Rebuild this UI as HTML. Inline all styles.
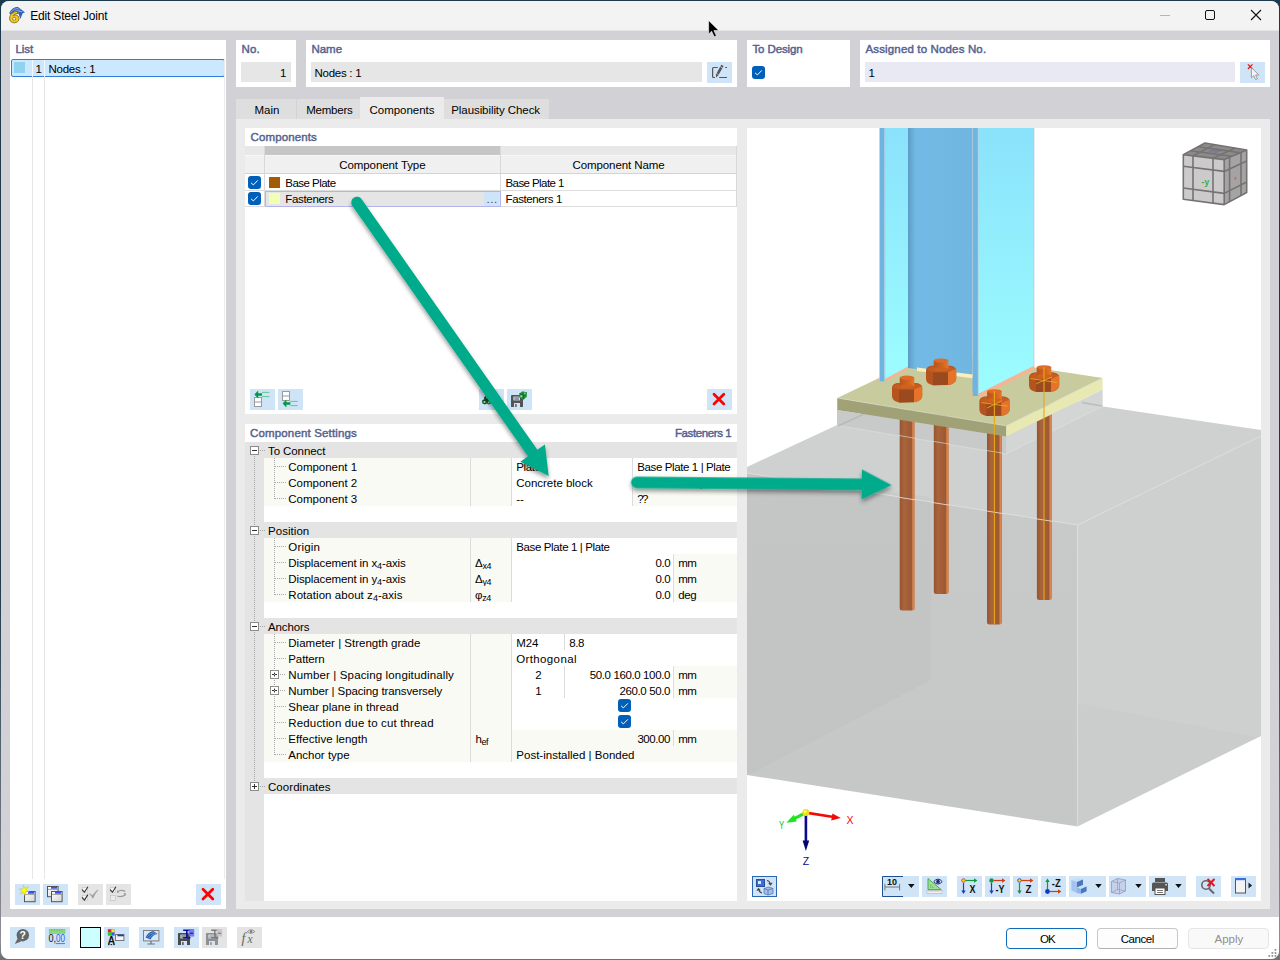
<!DOCTYPE html>
<html><head><meta charset="utf-8"><title>Edit Steel Joint</title>
<style>
html,body{margin:0;padding:0;}
body{width:1280px;height:960px;overflow:hidden;background:linear-gradient(180deg,#1b3b4c 0,#1b3b4c 60%,#8e8e96 98%,#6e6e74 100%);position:relative;font-family:"Liberation Sans",sans-serif;font-size:12px;color:#000;}
.a{position:absolute;box-sizing:border-box;}
.t{position:absolute;white-space:nowrap;line-height:16px;height:16px;font-size:11.5px;}
.r{text-align:right;}
.c{text-align:center;}
#win{left:1px;top:1px;width:1278px;height:957.6px;border-radius:8px;background:#d1d1d6;overflow:hidden;}
.wh{background:#fff;}
.hd{color:#55628f;font-weight:bold;font-size:11.5px;}
.btn{background:#cfe4f7;}
.btnd{background:#e4e4e4;}
.fld{background:#e6e6e6;}
.cb{background:#0f5fbf;border-radius:3px;width:13px;height:13px;}
svg{position:absolute;overflow:visible;}
</style></head><body>
<div id="win" class="a">
<div class="a" id="pg" style="left:-1px;top:-1px;width:1280px;height:960px;">
<!-- TITLEBAR -->
<div class="a" style="left:0;top:0;width:1280px;height:30px;background:#f3f3f3;"></div>
<div class="a" style="left:0;top:30px;width:1280px;height:1px;background:#e4e4e6;"></div>
<svg style="left:8px;top:4px;" width="20" height="22" viewBox="8 4 20 22">
 <path d="M9.2,13.2 C11,9 14.5,7.1 18,7.1 L25,12.3 L22.7,13.3 L20.4,19 L18.6,13.8 C16,12.7 13,13.4 11.4,15.2 Z" fill="#2f63b8"/>
 <path d="M10.8,12.4 C12.6,9.6 15.4,8.5 18.4,8.5 M13,13 C14.8,10.8 17.4,9.9 20.4,10 M16.4,13 C17.8,11.7 20,11.3 22.6,11.5" stroke="#9cc0f0" stroke-width="0.8" fill="none"/>
 <path d="M17.4,11.3 C13,11.5 9.8,14.4 9.6,18.2 C9.5,21 11.4,22.8 14.2,22.8 C17,22.8 19,21 19,18.6 C19,16.4 17.4,15 15.2,15 C14.4,15 13.7,15.2 13.2,15.6 C13.9,14.3 15.4,13.6 17.8,13.5 Z" fill="#f4cc20" stroke="#7a5c10" stroke-width="0.8"/>
 <circle cx="14.2" cy="18.8" r="1.6" fill="#f3f3f3" stroke="#7a5c10" stroke-width="0.7"/>
</svg>
<span class="t" style="left:30.3px;top:8px;letter-spacing:-0.190px;font-size:12px;">Edit Steel Joint</span>
<div class="a" style="left:1160px;top:15px;width:10px;height:1px;background:#b4b4b4;"></div>
<div class="a" style="left:1205px;top:10px;width:10px;height:10px;border:1px solid #111;border-radius:2px;"></div>
<svg style="left:1250px;top:9px;" width="12" height="12" viewBox="0 0 12 12"><path d="M1 1 L11 11 M11 1 L1 11" stroke="#111" stroke-width="1.1" fill="none"/></svg>
<!-- LEFT LIST PANEL -->
<div class="a" style="left:10px;top:40px;width:216px;height:869px;background:#fff;"></div>
<span class="t" style="left:15.5px;top:41px;letter-spacing:-0.099px;color:#55628f;-webkit-text-stroke:0.45px #55628f;">List</span>
<div class="a" style="left:11px;top:59px;width:214px;height:18px;background:#cce8ff;border:1px solid #2f7fd8;border-radius:2px;"></div>
<div class="a" style="left:32px;top:60px;width:1px;height:819px;background:#e6e6e6;"></div>
<div class="a" style="left:44px;top:60px;width:1px;height:819px;background:#e6e6e6;"></div>
<div class="a" style="left:224px;top:60px;width:1px;height:819px;background:#ebebeb;"></div>
<div class="a" style="left:32px;top:60px;width:1px;height:16px;background:#f2f8fd;"></div>
<div class="a" style="left:44px;top:60px;width:1px;height:16px;background:#f2f8fd;"></div>
<div class="a" style="left:14px;top:62px;width:11px;height:11px;background:#8fd3f0;"></div>
<span class="t" style="left:-258.55px;width:300px;text-align:right;top:61px;letter-spacing:-0.448px;">1</span>
<span class="t" style="left:48.5px;top:61px;letter-spacing:-0.274px;">Nodes : 1</span>
<div class="a btn" style="left:15px;top:884px;width:25px;height:21px;"></div>
<div class="a btn" style="left:43px;top:884px;width:25px;height:21px;"></div>
<div class="a btnd" style="left:78px;top:884px;width:25px;height:21px;"></div>
<div class="a btnd" style="left:106px;top:884px;width:25px;height:21px;"></div>
<div class="a btn" style="left:196px;top:884px;width:25px;height:21px;"></div>
<!-- HEADER PANELS -->
<div class="a" style="left:236px;top:40px;width:60px;height:47px;background:#fff;"></div>
<div class="a" style="left:306px;top:40px;width:431px;height:47px;background:#fff;"></div>
<div class="a" style="left:747px;top:40px;width:103px;height:47px;background:#fff;"></div>
<div class="a" style="left:860px;top:40px;width:410px;height:47px;background:#fff;"></div>
<span class="t" style="left:241.5px;top:41px;letter-spacing:0.118px;color:#55628f;-webkit-text-stroke:0.45px #55628f;">No.</span>
<span class="t" style="left:311.5px;top:41px;letter-spacing:-0.044px;color:#55628f;-webkit-text-stroke:0.45px #55628f;">Name</span>
<span class="t" style="left:752.5px;top:41px;letter-spacing:-0.126px;color:#55628f;-webkit-text-stroke:0.45px #55628f;">To Design</span>
<span class="t" style="left:865.5px;top:41px;letter-spacing:0.149px;color:#55628f;-webkit-text-stroke:0.45px #55628f;">Assigned to Nodes No.</span>
<div class="a" style="left:241px;top:62px;width:50px;height:20px;background:#e6e6e6;"></div>
<span class="t" style="left:-14.05px;width:300px;text-align:right;top:65px;letter-spacing:-0.448px;">1</span>
<div class="a" style="left:311px;top:62px;width:391px;height:20px;background:#e6e6e6;"></div>
<span class="t" style="left:314.5px;top:65px;letter-spacing:-0.274px;">Nodes : 1</span>
<div class="a" style="left:707px;top:62px;width:25px;height:21px;background:#cfe4f7;"></div>
<svg style="left:752px;top:66px;" width="13" height="13" viewBox="0 0 13 13"><rect width="13" height="13" rx="3" fill="#005fb8"/><path d="M3.1 6.9 L5.4 8.9 L9.8 4.4" stroke="#fff" stroke-width="1" fill="none"/></svg>
<div class="a" style="left:865px;top:62px;width:370px;height:20px;background:#e8e9f3;"></div>
<span class="t" style="left:868.5px;top:65px;letter-spacing:-0.448px;">1</span>
<div class="a" style="left:1240px;top:62px;width:25px;height:21px;background:#cfe4f7;"></div>
<!-- TABS -->
<div class="a" style="left:236px;top:99px;width:61px;height:21px;background:#dedede;"></div>
<div class="a" style="left:297px;top:99px;width:63px;height:21px;background:#dedede;"></div>
<div class="a" style="left:444px;top:99px;width:105px;height:21px;background:#dedede;"></div>
<div class="a" style="left:296px;top:99px;width:1px;height:20px;background:#d1d1d6;"></div>
<div class="a" style="left:236px;top:119px;width:1034px;height:790px;background:#ebebeb;"></div>
<div class="a" style="left:360px;top:97px;width:84px;height:23px;background:#ebebeb;"></div>
<span class="t" style="left:254.5px;top:102px;letter-spacing:0.019px;">Main</span>
<span class="t" style="left:306.25px;top:102px;letter-spacing:-0.239px;">Members</span>
<span class="t" style="left:369.5px;top:102px;letter-spacing:-0.020px;">Components</span>
<span class="t" style="left:451.25px;top:102px;letter-spacing:-0.076px;">Plausibility Check</span>
<!-- COMPONENTS PANEL -->
<div class="a" style="left:245px;top:128px;width:492px;height:286px;background:#fff;"></div>
<span class="t" style="left:250.5px;top:129px;letter-spacing:0.130px;color:#55628f;-webkit-text-stroke:0.45px #55628f;">Components</span>
<div class="a" style="left:245px;top:146px;width:19px;height:9px;background:#e8e8e8;"></div>
<div class="a" style="left:265px;top:146px;width:235px;height:9px;background:#c6c6c6;"></div>
<div class="a" style="left:501px;top:146px;width:235px;height:9px;background:#e8e8e8;"></div>
<div class="a" style="left:245px;top:155px;width:491px;height:1px;background:#f8f8f8;"></div>
<div class="a" style="left:245px;top:156px;width:491px;height:18px;background:#f0f0f0;"></div>
<div class="a" style="left:245px;top:173px;width:491px;height:1px;background:#d4d4d4;"></div>
<div class="a" style="left:264px;top:146px;width:1px;height:61px;background:#d9d9d9;"></div>
<div class="a" style="left:500px;top:146px;width:1px;height:61px;background:#d9d9d9;"></div>
<div class="a" style="left:736px;top:146px;width:1px;height:61px;background:#d9d9d9;"></div>
<span class="t" style="left:339.25px;top:157px;letter-spacing:-0.080px;">Component Type</span>
<span class="t" style="left:572.5px;top:157px;letter-spacing:-0.094px;">Component Name</span>
<div class="a" style="left:245px;top:190px;width:491px;height:1px;background:#dcdcdc;"></div>
<div class="a" style="left:245px;top:206px;width:491px;height:1px;background:#dcdcdc;"></div>
<div class="a" style="left:265px;top:191px;width:236px;height:16px;background:#e5e5e5;border:1px solid #b4b4ee;"></div>
<div class="a" style="left:484px;top:192px;width:15px;height:14px;background:#cfe4f7;"></div>
<span class="t" style="left:486.5px;top:190.5px;letter-spacing:-0.224px;color:#444;letter-spacing:0.6px;">...</span>
<svg style="left:248px;top:176px;" width="13" height="13" viewBox="0 0 13 13"><rect width="13" height="13" rx="3" fill="#005fb8"/><path d="M3.1 6.9 L5.4 8.9 L9.8 4.4" stroke="#fff" stroke-width="1" fill="none"/></svg>
<svg style="left:248px;top:192px;" width="13" height="13" viewBox="0 0 13 13"><rect width="13" height="13" rx="3" fill="#005fb8"/><path d="M3.1 6.9 L5.4 8.9 L9.8 4.4" stroke="#fff" stroke-width="1" fill="none"/></svg>
<div class="a" style="left:269px;top:177px;width:11px;height:11px;background:#a45c04;"></div>
<div class="a" style="left:269px;top:193px;width:11px;height:11px;background:#f0ffb4;"></div>
<span class="t" style="left:285.25px;top:175px;letter-spacing:-0.522px;">Base Plate</span>
<span class="t" style="left:285.25px;top:191px;letter-spacing:-0.314px;">Fasteners</span>
<span class="t" style="left:505.5px;top:175px;letter-spacing:-0.580px;">Base Plate 1</span>
<span class="t" style="left:505.5px;top:191px;letter-spacing:-0.383px;">Fasteners 1</span>
<div class="a" style="left:250px;top:389px;width:25px;height:21px;background:#cfe4f7;"></div>
<div class="a" style="left:278px;top:389px;width:25px;height:21px;background:#cfe4f7;"></div>
<div class="a" style="left:479px;top:389px;width:25px;height:21px;background:#cfe4f7;"></div>
<div class="a" style="left:507px;top:389px;width:25px;height:21px;background:#cfe4f7;"></div>
<div class="a" style="left:707px;top:389px;width:25px;height:21px;background:#cfe4f7;"></div>
<!-- COMPONENT SETTINGS -->
<div class="a" style="left:245px;top:424px;width:492px;height:477px;background:#fff;"></div>
<span class="t" style="left:250px;top:425px;letter-spacing:0.156px;color:#55628f;-webkit-text-stroke:0.45px #55628f;">Component Settings</span>
<span class="t" style="left:431.39px;width:300px;text-align:right;top:425px;letter-spacing:-0.386px;color:#55628f;-webkit-text-stroke:0.45px #55628f;">Fasteners 1</span>
<!-- PROPERTY GRID -->
<div class="a" style="left:245px;top:442px;width:19px;height:459px;background:#e4e4e4;"></div>
<div class="a" style="left:245px;top:442px;width:492px;height:16px;background:#e4e4e4;"></div>
<svg style="left:250px;top:446px;" width="9" height="9" viewBox="0 0 9 9"><rect x="0.5" y="0.5" width="8" height="8" fill="#fff" stroke="#8c8c8c"/><path d="M2 4.5 H7" stroke="#333" stroke-width="1"/></svg>
<span class="t" style="left:268px;top:443px;letter-spacing:-0.087px;">To Connect</span>
<div class="a" style="left:264px;top:458px;width:206px;height:16px;background:#fafaf5;"></div>
<div class="a" style="left:471px;top:458px;width:40px;height:16px;background:#fafaf5;"></div>
<div class="a" style="left:470px;top:458px;width:1px;height:16px;background:#dcdcdc;"></div>
<div class="a" style="left:511px;top:458px;width:1px;height:16px;background:#dcdcdc;"></div>
<div class="a" style="left:512px;top:458px;width:120px;height:16px;background:#fff;"></div>
<span class="t" style="left:516.3px;top:459px;letter-spacing:-0.367px;">Plate</span>
<div class="a" style="left:633px;top:458px;width:104px;height:16px;background:#fff;"></div>
<div class="a" style="left:632px;top:458px;width:1px;height:16px;background:#dcdcdc;"></div>
<span class="t" style="left:637.3px;top:459px;letter-spacing:-0.390px;">Base Plate 1 | Plate</span>
<span class="t" style="left:288.3px;top:459px;letter-spacing:-0.031px;">Component 1</span>
<div class="a" style="left:264px;top:474px;width:206px;height:16px;background:#fafaf5;"></div>
<div class="a" style="left:471px;top:474px;width:40px;height:16px;background:#fafaf5;"></div>
<div class="a" style="left:470px;top:474px;width:1px;height:16px;background:#dcdcdc;"></div>
<div class="a" style="left:511px;top:474px;width:1px;height:16px;background:#dcdcdc;"></div>
<div class="a" style="left:512px;top:474px;width:120px;height:16px;background:#fff;"></div>
<span class="t" style="left:516.3px;top:475px;letter-spacing:-0.021px;">Concrete block</span>
<div class="a" style="left:633px;top:474px;width:104px;height:16px;background:#fafaf5;"></div>
<div class="a" style="left:632px;top:474px;width:1px;height:16px;background:#dcdcdc;"></div>
<span class="t" style="left:637.3px;top:475px;letter-spacing:-0.485px;">Base Plate 1 | Block</span>
<span class="t" style="left:288.3px;top:475px;letter-spacing:-0.013px;">Component 2</span>
<div class="a" style="left:264px;top:490px;width:206px;height:16px;background:#fafaf5;"></div>
<div class="a" style="left:471px;top:490px;width:40px;height:16px;background:#fafaf5;"></div>
<div class="a" style="left:470px;top:490px;width:1px;height:16px;background:#dcdcdc;"></div>
<div class="a" style="left:511px;top:490px;width:1px;height:16px;background:#dcdcdc;"></div>
<div class="a" style="left:512px;top:490px;width:120px;height:16px;background:#fff;"></div>
<span class="t" style="left:516.3px;top:491px;letter-spacing:-0.229px;">--</span>
<div class="a" style="left:633px;top:490px;width:104px;height:16px;background:#fafaf5;"></div>
<div class="a" style="left:632px;top:490px;width:1px;height:16px;background:#dcdcdc;"></div>
<span class="t" style="left:637.3px;top:491px;letter-spacing:-1.695px;">??</span>
<span class="t" style="left:288.3px;top:491px;letter-spacing:-0.013px;">Component 3</span>
<div class="a" style="left:245px;top:522px;width:492px;height:16px;background:#e4e4e4;"></div>
<svg style="left:250px;top:526px;" width="9" height="9" viewBox="0 0 9 9"><rect x="0.5" y="0.5" width="8" height="8" fill="#fff" stroke="#8c8c8c"/><path d="M2 4.5 H7" stroke="#333" stroke-width="1"/></svg>
<span class="t" style="left:268px;top:523px;letter-spacing:0.049px;">Position</span>
<div class="a" style="left:264px;top:538px;width:206px;height:16px;background:#fafaf5;"></div>
<div class="a" style="left:471px;top:538px;width:40px;height:16px;background:#fafaf5;"></div>
<div class="a" style="left:470px;top:538px;width:1px;height:16px;background:#dcdcdc;"></div>
<div class="a" style="left:511px;top:538px;width:1px;height:16px;background:#dcdcdc;"></div>
<div class="a" style="left:512px;top:538px;width:225px;height:16px;background:#fff;"></div>
<span class="t" style="left:516.3px;top:539px;letter-spacing:-0.375px;">Base Plate 1 | Plate</span>
<span class="t" style="left:288.3px;top:539px;letter-spacing:0.204px;">Origin</span>
<div class="a" style="left:264px;top:554px;width:206px;height:16px;background:#fafaf5;"></div>
<div class="a" style="left:471px;top:554px;width:40px;height:16px;background:#fafaf5;"></div>
<div class="a" style="left:470px;top:554px;width:1px;height:16px;background:#dcdcdc;"></div>
<div class="a" style="left:511px;top:554px;width:1px;height:16px;background:#dcdcdc;"></div>
<div class="a" style="left:512px;top:554px;width:161px;height:16px;background:#fff;"></div>
<span class="t" style="left:370.10px;width:300px;text-align:right;top:555px;letter-spacing:-0.495px;">0.0</span>
<div class="a" style="left:674px;top:554px;width:63px;height:16px;background:#fafaf5;"></div>
<div class="a" style="left:673px;top:554px;width:1px;height:16px;background:#dcdcdc;"></div>
<span class="t" style="left:678.3px;top:555px;letter-spacing:-0.671px;">mm</span>
<span class="t" style="left:288.3px;top:555px;letter-spacing:-0.119px;">Displacement in x<span style="font-size:9px;position:relative;top:1.5px;">4</span>-axis</span>
<span class="t" style="left:475px;top:555px;letter-spacing:-0.3px;">Δ<span style="font-size:9px;position:relative;top:1.5px;letter-spacing:-0.4px;">x4</span></span>
<div class="a" style="left:264px;top:570px;width:206px;height:16px;background:#fafaf5;"></div>
<div class="a" style="left:471px;top:570px;width:40px;height:16px;background:#fafaf5;"></div>
<div class="a" style="left:470px;top:570px;width:1px;height:16px;background:#dcdcdc;"></div>
<div class="a" style="left:511px;top:570px;width:1px;height:16px;background:#dcdcdc;"></div>
<div class="a" style="left:512px;top:570px;width:161px;height:16px;background:#fff;"></div>
<span class="t" style="left:370.10px;width:300px;text-align:right;top:571px;letter-spacing:-0.495px;">0.0</span>
<div class="a" style="left:674px;top:570px;width:63px;height:16px;background:#fafaf5;"></div>
<div class="a" style="left:673px;top:570px;width:1px;height:16px;background:#dcdcdc;"></div>
<span class="t" style="left:678.3px;top:571px;letter-spacing:-0.671px;">mm</span>
<span class="t" style="left:288.3px;top:571px;letter-spacing:-0.119px;">Displacement in y<span style="font-size:9px;position:relative;top:1.5px;">4</span>-axis</span>
<span class="t" style="left:475px;top:571px;letter-spacing:-0.3px;">Δ<span style="font-size:9px;position:relative;top:1.5px;letter-spacing:-0.4px;">y4</span></span>
<div class="a" style="left:264px;top:586px;width:206px;height:16px;background:#fafaf5;"></div>
<div class="a" style="left:471px;top:586px;width:40px;height:16px;background:#fafaf5;"></div>
<div class="a" style="left:470px;top:586px;width:1px;height:16px;background:#dcdcdc;"></div>
<div class="a" style="left:511px;top:586px;width:1px;height:16px;background:#dcdcdc;"></div>
<div class="a" style="left:512px;top:586px;width:161px;height:16px;background:#fff;"></div>
<span class="t" style="left:370.10px;width:300px;text-align:right;top:587px;letter-spacing:-0.495px;">0.0</span>
<div class="a" style="left:674px;top:586px;width:63px;height:16px;background:#fafaf5;"></div>
<div class="a" style="left:673px;top:586px;width:1px;height:16px;background:#dcdcdc;"></div>
<span class="t" style="left:678.3px;top:587px;letter-spacing:-0.448px;">deg</span>
<span class="t" style="left:288.3px;top:587px;letter-spacing:0.053px;">Rotation about z<span style="font-size:9px;position:relative;top:1.5px;">4</span>-axis</span>
<span class="t" style="left:475px;top:587px;letter-spacing:-0.3px;">φ<span style="font-size:9px;position:relative;top:1.5px;letter-spacing:-0.4px;">z4</span></span>
<div class="a" style="left:245px;top:618px;width:492px;height:16px;background:#e4e4e4;"></div>
<svg style="left:250px;top:622px;" width="9" height="9" viewBox="0 0 9 9"><rect x="0.5" y="0.5" width="8" height="8" fill="#fff" stroke="#8c8c8c"/><path d="M2 4.5 H7" stroke="#333" stroke-width="1"/></svg>
<span class="t" style="left:268px;top:619px;letter-spacing:-0.112px;">Anchors</span>
<div class="a" style="left:264px;top:634px;width:206px;height:16px;background:#fafaf5;"></div>
<div class="a" style="left:471px;top:634px;width:40px;height:16px;background:#fafaf5;"></div>
<div class="a" style="left:470px;top:634px;width:1px;height:16px;background:#dcdcdc;"></div>
<div class="a" style="left:511px;top:634px;width:1px;height:16px;background:#dcdcdc;"></div>
<div class="a" style="left:512px;top:634px;width:52px;height:16px;background:#fff;"></div>
<span class="t" style="left:516.3px;top:635px;letter-spacing:-0.123px;">M24</span>
<div class="a" style="left:565px;top:634px;width:172px;height:16px;background:#fff;"></div>
<div class="a" style="left:564px;top:634px;width:1px;height:16px;background:#dcdcdc;"></div>
<span class="t" style="left:569.3px;top:635px;letter-spacing:-0.495px;">8.8</span>
<span class="t" style="left:288.3px;top:635px;letter-spacing:-0.000px;">Diameter | Strength grade</span>
<div class="a" style="left:264px;top:650px;width:206px;height:16px;background:#fafaf5;"></div>
<div class="a" style="left:471px;top:650px;width:40px;height:16px;background:#fafaf5;"></div>
<div class="a" style="left:470px;top:650px;width:1px;height:16px;background:#dcdcdc;"></div>
<div class="a" style="left:511px;top:650px;width:1px;height:16px;background:#dcdcdc;"></div>
<div class="a" style="left:512px;top:650px;width:225px;height:16px;background:#fff;"></div>
<span class="t" style="left:516.3px;top:651px;letter-spacing:0.361px;">Orthogonal</span>
<span class="t" style="left:288.3px;top:651px;letter-spacing:-0.111px;">Pattern</span>
<div class="a" style="left:264px;top:666px;width:206px;height:16px;background:#fafaf5;"></div>
<div class="a" style="left:471px;top:666px;width:40px;height:16px;background:#fafaf5;"></div>
<div class="a" style="left:470px;top:666px;width:1px;height:16px;background:#dcdcdc;"></div>
<div class="a" style="left:511px;top:666px;width:1px;height:16px;background:#dcdcdc;"></div>
<div class="a" style="left:512px;top:666px;width:52px;height:16px;background:#fff;"></div>
<span class="t" style="left:388.22px;width:300px;text-align:center;top:667px;letter-spacing:-0.448px;">2</span>
<div class="a" style="left:565px;top:666px;width:108px;height:16px;background:#fff;"></div>
<div class="a" style="left:564px;top:666px;width:1px;height:16px;background:#dcdcdc;"></div>
<span class="t" style="left:369.98px;width:300px;text-align:right;top:667px;letter-spacing:-0.383px;">50.0 160.0 100.0</span>
<div class="a" style="left:674px;top:666px;width:63px;height:16px;background:#fafaf5;"></div>
<div class="a" style="left:673px;top:666px;width:1px;height:16px;background:#dcdcdc;"></div>
<span class="t" style="left:678.3px;top:667px;letter-spacing:-0.671px;">mm</span>
<svg style="left:270px;top:670px;" width="9" height="9" viewBox="0 0 9 9"><rect x="0.5" y="0.5" width="8" height="8" fill="#fff" stroke="#8c8c8c"/><path d="M2 4.5 H7 M4.5 2 V7" stroke="#333" stroke-width="1"/></svg>
<span class="t" style="left:288.3px;top:667px;letter-spacing:0.135px;">Number | Spacing longitudinally</span>
<div class="a" style="left:264px;top:682px;width:206px;height:16px;background:#fafaf5;"></div>
<div class="a" style="left:471px;top:682px;width:40px;height:16px;background:#fafaf5;"></div>
<div class="a" style="left:470px;top:682px;width:1px;height:16px;background:#dcdcdc;"></div>
<div class="a" style="left:511px;top:682px;width:1px;height:16px;background:#dcdcdc;"></div>
<div class="a" style="left:512px;top:682px;width:52px;height:16px;background:#fff;"></div>
<span class="t" style="left:388.22px;width:300px;text-align:center;top:683px;letter-spacing:-0.448px;">1</span>
<div class="a" style="left:565px;top:682px;width:108px;height:16px;background:#fff;"></div>
<div class="a" style="left:564px;top:682px;width:1px;height:16px;background:#dcdcdc;"></div>
<span class="t" style="left:369.99px;width:300px;text-align:right;top:683px;letter-spacing:-0.385px;">260.0 50.0</span>
<div class="a" style="left:674px;top:682px;width:63px;height:16px;background:#fafaf5;"></div>
<div class="a" style="left:673px;top:682px;width:1px;height:16px;background:#dcdcdc;"></div>
<span class="t" style="left:678.3px;top:683px;letter-spacing:-0.671px;">mm</span>
<svg style="left:270px;top:686px;" width="9" height="9" viewBox="0 0 9 9"><rect x="0.5" y="0.5" width="8" height="8" fill="#fff" stroke="#8c8c8c"/><path d="M2 4.5 H7 M4.5 2 V7" stroke="#333" stroke-width="1"/></svg>
<span class="t" style="left:288.3px;top:683px;letter-spacing:-0.111px;">Number | Spacing transversely</span>
<div class="a" style="left:264px;top:698px;width:206px;height:16px;background:#fafaf5;"></div>
<div class="a" style="left:471px;top:698px;width:40px;height:16px;background:#fafaf5;"></div>
<div class="a" style="left:470px;top:698px;width:1px;height:16px;background:#dcdcdc;"></div>
<div class="a" style="left:511px;top:698px;width:1px;height:16px;background:#dcdcdc;"></div>
<div class="a" style="left:512px;top:698px;width:225px;height:16px;background:#fff;"></div>
<span class="t" style="left:288.3px;top:699px;letter-spacing:0.021px;">Shear plane in thread</span>
<div class="a" style="left:264px;top:714px;width:206px;height:16px;background:#fafaf5;"></div>
<div class="a" style="left:471px;top:714px;width:40px;height:16px;background:#fafaf5;"></div>
<div class="a" style="left:470px;top:714px;width:1px;height:16px;background:#dcdcdc;"></div>
<div class="a" style="left:511px;top:714px;width:1px;height:16px;background:#dcdcdc;"></div>
<div class="a" style="left:512px;top:714px;width:225px;height:16px;background:#fff;"></div>
<span class="t" style="left:288.3px;top:715px;letter-spacing:0.153px;">Reduction due to cut thread</span>
<svg style="left:618px;top:699px;" width="13" height="13" viewBox="0 0 13 13"><rect width="13" height="13" rx="3" fill="#005fb8"/><path d="M3.1 6.9 L5.4 8.9 L9.8 4.4" stroke="#fff" stroke-width="1" fill="none"/></svg>
<svg style="left:618px;top:715px;" width="13" height="13" viewBox="0 0 13 13"><rect width="13" height="13" rx="3" fill="#005fb8"/><path d="M3.1 6.9 L5.4 8.9 L9.8 4.4" stroke="#fff" stroke-width="1" fill="none"/></svg>
<div class="a" style="left:264px;top:730px;width:206px;height:16px;background:#fafaf5;"></div>
<div class="a" style="left:471px;top:730px;width:40px;height:16px;background:#fafaf5;"></div>
<div class="a" style="left:470px;top:730px;width:1px;height:16px;background:#dcdcdc;"></div>
<div class="a" style="left:511px;top:730px;width:1px;height:16px;background:#dcdcdc;"></div>
<div class="a" style="left:512px;top:730px;width:161px;height:16px;background:#fafaf5;"></div>
<span class="t" style="left:370.03px;width:300px;text-align:right;top:731px;letter-spacing:-0.428px;">300.00</span>
<div class="a" style="left:674px;top:730px;width:63px;height:16px;background:#fafaf5;"></div>
<div class="a" style="left:673px;top:730px;width:1px;height:16px;background:#dcdcdc;"></div>
<span class="t" style="left:678.3px;top:731px;letter-spacing:-0.671px;">mm</span>
<span class="t" style="left:288.3px;top:731px;letter-spacing:0.049px;">Effective length</span>
<span class="t" style="left:475.4px;top:731px;letter-spacing:-0.3px;">h<span style="font-size:9px;position:relative;top:1.5px;letter-spacing:-0.4px;">ef</span></span>
<div class="a" style="left:264px;top:746px;width:206px;height:16px;background:#fafaf5;"></div>
<div class="a" style="left:471px;top:746px;width:40px;height:16px;background:#fafaf5;"></div>
<div class="a" style="left:470px;top:746px;width:1px;height:16px;background:#dcdcdc;"></div>
<div class="a" style="left:511px;top:746px;width:1px;height:16px;background:#dcdcdc;"></div>
<div class="a" style="left:512px;top:746px;width:225px;height:16px;background:#fafaf5;"></div>
<span class="t" style="left:516.3px;top:747px;letter-spacing:0.006px;">Post-installed | Bonded</span>
<span class="t" style="left:288.3px;top:747px;letter-spacing:-0.006px;">Anchor type</span>
<div class="a" style="left:245px;top:778px;width:492px;height:16px;background:#e4e4e4;"></div>
<svg style="left:250px;top:782px;" width="9" height="9" viewBox="0 0 9 9"><rect x="0.5" y="0.5" width="8" height="8" fill="#fff" stroke="#8c8c8c"/><path d="M2 4.5 H7 M4.5 2 V7" stroke="#333" stroke-width="1"/></svg>
<span class="t" style="left:268px;top:779px;letter-spacing:0.054px;">Coordinates</span>
<div class="a" style="left:260px;top:450px;width:6px;height:1px;background:repeating-linear-gradient(90deg,#a8a8a8 0 1px,transparent 1px 2px);"></div>
<div class="a" style="left:260px;top:530px;width:6px;height:1px;background:repeating-linear-gradient(90deg,#a8a8a8 0 1px,transparent 1px 2px);"></div>
<div class="a" style="left:260px;top:626px;width:6px;height:1px;background:repeating-linear-gradient(90deg,#a8a8a8 0 1px,transparent 1px 2px);"></div>
<div class="a" style="left:260px;top:786px;width:6px;height:1px;background:repeating-linear-gradient(90deg,#a8a8a8 0 1px,transparent 1px 2px);"></div>
<div class="a" style="left:254px;top:456px;width:1px;height:70px;background:repeating-linear-gradient(180deg,#a8a8a8 0 1px,transparent 1px 2px);"></div>
<div class="a" style="left:254px;top:536px;width:1px;height:86px;background:repeating-linear-gradient(180deg,#a8a8a8 0 1px,transparent 1px 2px);"></div>
<div class="a" style="left:254px;top:632px;width:1px;height:150px;background:repeating-linear-gradient(180deg,#a8a8a8 0 1px,transparent 1px 2px);"></div>
<div class="a" style="left:274px;top:458px;width:1px;height:41px;background:repeating-linear-gradient(180deg,#a8a8a8 0 1px,transparent 1px 2px);"></div>
<div class="a" style="left:275px;top:466px;width:11px;height:1px;background:repeating-linear-gradient(90deg,#a8a8a8 0 1px,transparent 1px 2px);"></div>
<div class="a" style="left:275px;top:482px;width:11px;height:1px;background:repeating-linear-gradient(90deg,#a8a8a8 0 1px,transparent 1px 2px);"></div>
<div class="a" style="left:275px;top:498px;width:11px;height:1px;background:repeating-linear-gradient(90deg,#a8a8a8 0 1px,transparent 1px 2px);"></div>
<div class="a" style="left:274px;top:538px;width:1px;height:57px;background:repeating-linear-gradient(180deg,#a8a8a8 0 1px,transparent 1px 2px);"></div>
<div class="a" style="left:275px;top:546px;width:11px;height:1px;background:repeating-linear-gradient(90deg,#a8a8a8 0 1px,transparent 1px 2px);"></div>
<div class="a" style="left:275px;top:562px;width:11px;height:1px;background:repeating-linear-gradient(90deg,#a8a8a8 0 1px,transparent 1px 2px);"></div>
<div class="a" style="left:275px;top:578px;width:11px;height:1px;background:repeating-linear-gradient(90deg,#a8a8a8 0 1px,transparent 1px 2px);"></div>
<div class="a" style="left:275px;top:594px;width:11px;height:1px;background:repeating-linear-gradient(90deg,#a8a8a8 0 1px,transparent 1px 2px);"></div>
<div class="a" style="left:274px;top:634px;width:1px;height:121px;background:repeating-linear-gradient(180deg,#a8a8a8 0 1px,transparent 1px 2px);"></div>
<div class="a" style="left:275px;top:642px;width:11px;height:1px;background:repeating-linear-gradient(90deg,#a8a8a8 0 1px,transparent 1px 2px);"></div>
<div class="a" style="left:275px;top:658px;width:11px;height:1px;background:repeating-linear-gradient(90deg,#a8a8a8 0 1px,transparent 1px 2px);"></div>
<div class="a" style="left:280px;top:674px;width:6px;height:1px;background:repeating-linear-gradient(90deg,#a8a8a8 0 1px,transparent 1px 2px);"></div>
<div class="a" style="left:280px;top:690px;width:6px;height:1px;background:repeating-linear-gradient(90deg,#a8a8a8 0 1px,transparent 1px 2px);"></div>
<div class="a" style="left:275px;top:706px;width:11px;height:1px;background:repeating-linear-gradient(90deg,#a8a8a8 0 1px,transparent 1px 2px);"></div>
<div class="a" style="left:275px;top:722px;width:11px;height:1px;background:repeating-linear-gradient(90deg,#a8a8a8 0 1px,transparent 1px 2px);"></div>
<div class="a" style="left:275px;top:738px;width:11px;height:1px;background:repeating-linear-gradient(90deg,#a8a8a8 0 1px,transparent 1px 2px);"></div>
<div class="a" style="left:275px;top:754px;width:11px;height:1px;background:repeating-linear-gradient(90deg,#a8a8a8 0 1px,transparent 1px 2px);"></div>
<!-- 3D VIEW -->
<div class="a wh" style="left:747px;top:128px;width:514px;height:773px;"></div>
<svg style="left:747px;top:128px;overflow:hidden;" width="514" height="773" viewBox="747 128 514 773">
<defs>
 <linearGradient id="gcy" x1="0" y1="0" x2="0" y2="1"><stop offset="0" stop-color="#8ae2fb"/><stop offset="1" stop-color="#9cfdff"/></linearGradient>
 <linearGradient id="gweb" x1="0" y1="0" x2="1" y2="0"><stop offset="0" stop-color="#5d9cc4"/><stop offset="0.12" stop-color="#72bae5"/><stop offset="1" stop-color="#70b6e0"/></linearGradient>
 <linearGradient id="grod" x1="0" y1="0" x2="1" y2="0"><stop offset="0" stop-color="#96552f"/><stop offset="0.3" stop-color="#a9643c"/><stop offset="0.78" stop-color="#9c5933"/><stop offset="0.88" stop-color="#dc8850"/><stop offset="1" stop-color="#c87a48"/></linearGradient>
 <linearGradient id="gstud" x1="0" y1="0" x2="1" y2="0"><stop offset="0" stop-color="#b8541c"/><stop offset="0.6" stop-color="#d2641f"/><stop offset="1" stop-color="#e8782c"/></linearGradient>
 <linearGradient id="gleft" x1="0" y1="0" x2="0" y2="1"><stop offset="0" stop-color="#c8c9c9"/><stop offset="1" stop-color="#c6c7c7"/></linearGradient>
 <g id="nut">
  <path d="M-15 -2 Q-15 -6 -10 -7 L10 -7 Q15.2 -6 15.2 -2 L15.2 6 Q15 10 9 12 L-8 12.5 Q-15 11 -15 6 Z" fill="#b5541f"/>
  <path d="M-8 -2 L7 -2 L7 12.2 L-8 12.5 Z" fill="#9a4a1e"/>
  <path d="M7 -2 L15.2 -4 L15.2 6 Q15 10 9 12 L7 12.2 Z" fill="#e6732a"/>
  <path d="M-15 -3 L-8 -7 L8 -7 L15.2 -4 L7 -0.5 L-8 -0.5 Z" fill="#c65c20"/>
  <rect x="-7.3" y="-12.5" width="14.6" height="9" fill="url(#gstud)"/>
  <ellipse cx="0" cy="-3.6" rx="7.3" ry="2" fill="#cf621f"/>
  <ellipse cx="0" cy="-12.3" rx="7.3" ry="2.1" fill="#dc6c28"/>
 </g>
</defs>
<!-- concrete block -->
<polygon points="747,467 931.5,381 1261,430 1261,436 1077.6,525 747,473" fill="#cfd1d1"/>
<polygon points="747,473 1077.6,525 1077.6,826.5 747,775" fill="url(#gleft)"/>
<polygon points="1077.6,525 1261,436 1261,736 1077.6,826.5" fill="#cecfcf"/>
<polygon points="747,473 931,497 931,680 747,776" fill="#000" fill-opacity="0.02"/>
<polygon points="1077.6,703 1261,738 1261,736 1077.6,826.5" fill="#000" fill-opacity="0.012"/>
<path d="M747,473 L1077.6,525 L1261,436 M1077.6,525 V826.5" stroke="#dddede" stroke-width="0.8" fill="none"/>
<!-- grout -->
<polygon points="837,410 1006,436.5 1006,454 837,425.4" fill="#c8c9c9"/>
<polygon points="1006,436.5 1102.7,389.5 1102.7,406.4 1006,454" fill="#d4d5d5"/>
<path d="M837,425.4 L1006,454 L1102.7,406.4" stroke="#dddede" stroke-width="0.7" fill="none"/>
<path d="M838,426 L863,414.5 M1102,406 L1082,402.5" stroke="#b4b5b5" stroke-width="1.4" fill="none" opacity="0.8"/>
<!-- rods -->
<rect x="899.7" y="410" width="15" height="200.5" rx="2.5" fill="url(#grod)"/>
<rect x="933.8" y="414" width="15" height="180" rx="2.5" fill="url(#grod)"/>
<rect x="987" y="425" width="15" height="199.5" rx="2.5" fill="url(#grod)"/>
<rect x="1036.9" y="400" width="15" height="200" rx="2.5" fill="url(#grod)"/>
<!-- translucent concrete/grout overlay on rods -->
<path d="M899,497.3 L915.5,499.9 M933,502.6 L949.5,505.2 M986,510.9 L1003,513.6 M1036,518.8 L1053,521.4" stroke="#dcdcdc" stroke-width="0.9"/>
<path d="M899,435.5 L915.5,438.3 M933,441.3 L949.5,444.1 M986,450.4 L1003,453.2" stroke="#dcdcdc" stroke-width="0.8" opacity="0.8"/>
<!-- plate -->
<polygon points="837.25,398 933.5,352 1102.5,378 1006.25,425.8" fill="#c8cb9e"/>
<polygon points="837.25,398 1006.25,425.8 1006.25,436.4 837.25,410" fill="#a1a178"/>
<polygon points="1006.25,425.8 1102.5,378 1102.5,389.6 1006.25,436.4" fill="#e7e8b2"/>
<path d="M837.25,398 L1006.25,425.8 L1102.5,378" stroke="#dcdcc8" stroke-width="0.7" fill="none"/>
<!-- column -->
<rect x="879.5" y="128" width="5.2" height="253.3" fill="#6db4e0"/>
<polygon points="884.7,128 908,128 908,368 884.7,380.8" fill="url(#gcy)"/>
<polygon points="908,128 972.5,128 972.5,376 908,368" fill="url(#gweb)"/>
<rect x="972.5" y="128" width="5.8" height="268" fill="#6db4e0"/>
<polygon points="978.3,128 1034,128 1034,366.5 978.3,395.5" fill="url(#gcy)"/>
<path d="M884.9,128 V380 M972.7,128 V376 M978.1,128 V395 M1034,128 V366" stroke="#b9c6d2" stroke-width="0.7" fill="none"/>
<!-- welds -->
<polygon points="886,381.6 908,369.4 908,366.5 884.7,379" fill="#f5b592"/>
<polygon points="877.5,379 880,377.5 880,381 " fill="#f5b592"/>
<polygon points="979.5,397.6 1035.2,369.2 1034,365.8 978.3,393.8" fill="#f5b592"/>
<polygon points="970,393 972.6,391.6 972.6,395.4" fill="#f5b592"/>
<polygon points="917,367.4 972.5,374.6 972.5,378.2 917,371" fill="#fdeebc"/>
<!-- nuts -->
<use href="#nut" x="907" y="390"/>
<use href="#nut" x="941" y="372.8"/>
<use href="#nut" x="994.4" y="403.6"/>
<use href="#nut" x="1044" y="379.6"/>
<!-- yellow axis lines -->
<path d="M994.4,391 V624 M1044,367 V600" stroke="#e8a818" stroke-width="1.1" fill="none"/>
<path d="M981.25,402.5 L1007.5,406.25 M987,408 L1002,400.6 M1030.6,378.5 L1056.9,382.5 M1036.25,383.75 L1051.9,376.9" stroke="#f0b020" stroke-width="0.8" fill="none"/>
</svg>
<!-- 3D TOOLBAR -->
<svg style="left:747px;top:870px;" width="514" height="31" viewBox="747 870 514 31" font-family="Liberation Sans, sans-serif">
<g fill="#cfe4f7">
<rect x="752" y="876" width="25" height="21"/><rect x="882" y="876" width="37" height="21"/><rect x="922" y="876" width="25" height="21"/>
<rect x="957" y="876" width="25" height="21"/><rect x="985" y="876" width="25" height="21"/><rect x="1013" y="876" width="25" height="21"/><rect x="1041" y="876" width="25" height="21"/>
<rect x="1069" y="876" width="37" height="21"/><rect x="1109" y="876" width="37" height="21"/><rect x="1149" y="876" width="37" height="21"/>
<rect x="1196" y="876" width="25" height="21"/><rect x="1231" y="876" width="25" height="21"/>
</g>
<rect x="752.5" y="876.5" width="24" height="20" fill="none" stroke="#2d66b0"/>
<path d="M903,876.5 H882.5 V896.5 H903" fill="none" stroke="#1d4f91"/>
<!-- b1 icon -->
<rect x="756.5" y="879.5" width="8" height="7" fill="#3a6fd0" stroke="#2a4f9a"/><rect x="758" y="881" width="3" height="3" fill="#dfe9fb"/>
<path d="M767,880.5 q3,0.5 3.5,4 m-1.8,-1.5 l1.8,2 l1.6,-2.2 M762,893 q-3,-0.5 -3.5,-4 m1.8,1.5 l-1.8,-2 l-1.6,2.2" stroke="#444" stroke-width="1.1" fill="none"/>
<path d="M764,888.5 l5,-1.5 l4,1.5 v5 l-5,1.5 l-4,-1.5 z" fill="#9fc0ea" stroke="#4a6fa8" stroke-width="0.7"/><path d="M764,888.5 l4,1.5 l5,-1.5 M768,890 v5" stroke="#4a6fa8" stroke-width="0.7" fill="none"/>
<!-- 10 -->
<text x="892" y="885" font-size="9" font-weight="bold" text-anchor="middle" fill="#111">10</text>
<path d="M884.9,883.8 V890.4 M899.6,883.8 V890.4 M885,887 H899.5" stroke="#6a6a6a" stroke-width="0.9" fill="none"/>
<path d="M908,884 h6.6 l-3.3,4 z M1095.2,884 h6.6 l-3.3,4 z M1135.2,884 h6.6 l-3.3,4 z M1175.2,884 h6.6 l-3.3,4 z" fill="#111"/>
<!-- measure -->
<path d="M928,878.6 V889.6 H941.2 Z" fill="#9be48c" stroke="#4b9b50" stroke-width="0.9"/><path d="M930.4,884.6 v2.8 h3 z" fill="#cfe4f7" stroke="#4b9b50" stroke-width="0.5"/>
<rect x="927" y="890.4" width="15" height="3" fill="#f0f0f0" stroke="#a8a8a8" stroke-width="0.5"/><path d="M929,890.6 v1.4 M931,890.6 v1.4 M933,890.6 v1.4 M935,890.6 v1.4 M937,890.6 v1.4 M939,890.6 v1.4" stroke="#a0a0a0" stroke-width="0.5"/>
<path d="M933.8,881.6 q4.2,-5 8.4,0 q-4.2,5 -8.4,0 z" fill="#e8eefc" stroke="#1d2a7a" stroke-width="1"/><circle cx="938" cy="881.6" r="1.9" fill="#1d2a7a"/>
<!-- X -->
<g stroke-width="1.2" fill="none">
<path d="M965.5,880.5 H975" stroke="#109a3a"/><path d="M963.5,883 V892" stroke="#1540d0"/>
<path d="M993.5,880.5 H1003" stroke="#d63a10"/><path d="M991.5,883 V892" stroke="#1540d0"/>
<path d="M1021.5,880.5 H1031" stroke="#d63a10"/><path d="M1019.5,883 V892" stroke="#109a3a"/>
<path d="M1050,891.5 H1059" stroke="#d63a10"/><path d="M1047.5,889 V880.5" stroke="#109a3a"/>
</g>
<path d="M974,878.3 l3.4,2.2 l-3.4,2.2 z" fill="#109a3a"/><path d="M961.3,890.5 h4.4 l-2.2,3.4 z" fill="#1540d0"/>
<path d="M1002,878.3 l3.4,2.2 l-3.4,2.2 z" fill="#d63a10"/><path d="M989.3,890.5 h4.4 l-2.2,3.4 z" fill="#1540d0"/>
<path d="M1030,878.3 l3.4,2.2 l-3.4,2.2 z" fill="#d63a10"/><path d="M1017.3,890.5 h4.4 l-2.2,3.4 z" fill="#109a3a"/>
<path d="M1058,889.3 l3.4,2.2 l-3.4,2.2 z" fill="#d63a10"/><path d="M1045.3,882 h4.4 l-2.2,-3.4 z" fill="#109a3a"/>
<circle cx="963.5" cy="880.5" r="1.8" fill="#ffd21a" stroke="#d8301a" stroke-width="0.8"/>
<circle cx="991.5" cy="880.5" r="2.2" fill="#109a3a"/>
<circle cx="1019.5" cy="880.5" r="1.8" fill="#ffd21a" stroke="#1540d0" stroke-width="0.8"/>
<circle cx="1047.5" cy="891.5" r="2.4" fill="#1238c8"/>
<g font-size="10.5" font-weight="bold" fill="#111" text-anchor="middle">
<text x="972.6" y="892.6" textLength="6" lengthAdjust="spacingAndGlyphs">X</text>
<text x="1000" y="892.6" textLength="9" lengthAdjust="spacingAndGlyphs">-Y</text>
<text x="1028.6" y="892.6" textLength="6" lengthAdjust="spacingAndGlyphs">Z</text>
<text x="1056.3" y="887.4" textLength="9" lengthAdjust="spacingAndGlyphs">-Z</text>
</g>
<!-- solid steps -->
<polygon points="1071.4,880 1078,878 1083,879.5 1077,882" fill="#c6dcf8"/>
<polygon points="1071.4,880 1077,882 1077,893 1071.4,890.6" fill="#a2c4ee"/>
<polygon points="1077,882 1083,879.5 1083,885 1077,887.5" fill="#4a76be"/>
<polygon points="1077,887.5 1083,885 1086.6,886.4 1081,889" fill="#c6dcf8"/>
<polygon points="1077,887.5 1081,889 1081,893.8 1077,893" fill="#8fb4e6"/>
<polygon points="1081,889 1086.6,886.4 1086.6,891.2 1081,893.8" fill="#4a76be"/>
<!-- wire cube -->
<path d="M1111.5,881.5 l6,-3 l8,1.5 v11 l-6,3 l-8,-1.5 z" fill="#c4cbe6" fill-opacity="0.8" stroke="#8a90b4" stroke-width="0.7"/>
<path d="M1111.5,881.5 l8,1.5 l6,-3 M1119.5,883 v11 M1117.5,878.5 v11 l-6,3 M1117.5,889.5 l8,1.5" fill="none" stroke="#8a90b4" stroke-width="0.6"/>
<!-- printer -->
<rect x="1155" y="878" width="10" height="4" fill="#555"/><path d="M1152,884 q0,-1.5 1.5,-1.5 h13 q1.5,0 1.5,1.5 v7 h-16 z" fill="#555"/>
<rect x="1155" y="888" width="10" height="6.5" fill="#fff" stroke="#555" stroke-width="1"/><path d="M1157,890.5 h6 M1157,892.5 h6" stroke="#555" stroke-width="0.8"/><rect x="1165.3" y="884.2" width="1.6" height="1.2" fill="#fff"/>
<!-- search x -->
<circle cx="1206" cy="885" r="4.2" fill="none" stroke="#666" stroke-width="1.6"/><path d="M1209,888.5 L1214,893.5" stroke="#666" stroke-width="2"/>
<path d="M1207.5,879 l7,7 M1214.5,879 l-7,7" stroke="#e8141c" stroke-width="2.1"/>
<!-- page -->
<rect x="1235.5" y="878.5" width="10" height="14.5" fill="#f4f4f4" stroke="#555" stroke-width="1"/><rect x="1235" y="878" width="11" height="2.2" fill="#3a6fe0"/>
<path d="M1248.5,882.5 l3.6,3 l-3.6,3 z" fill="#222"/>
</svg>
<!-- NAV CUBE + AXES -->
<svg style="left:1170px;top:135px;" width="90" height="80" viewBox="1170 135 90 80" font-family="Liberation Sans, sans-serif">
<polygon points="1183.3,154.6 1205,143 1246.7,150 1224.2,159.6" fill="#8b8b8b"/>
<polygon points="1183.3,154.6 1224.2,159.6 1224.2,204.6 1183.3,199.2" fill="#cbcbcb"/>
<polygon points="1224.2,159.6 1246.7,150 1246.7,192.5 1224.2,204.6" fill="#a4a4a4"/>
<polygon points="1207,151.2 1216,148.4 1225,150 1216,153" fill="#7a7e8c"/>
<g stroke="#777272" stroke-width="1.6" fill="none" stroke-linejoin="round">
<path d="M1183.3,154.6 L1224.2,159.6 V204.6 L1183.3,199.2 Z M1183.3,154.6 L1205,143 L1246.7,150 L1224.2,159.6 M1246.7,150 V192.5 L1224.2,204.6"/>
<path d="M1193,155.8 V200.5 M1213,158.2 V203.1 M1183.3,166.2 L1224.2,171.4 M1183.3,188 L1224.2,193.4"/>
<path d="M1229.6,157.3 V201.7 M1241,152.4 V195.6 M1224.2,171.4 L1246.7,161 M1224.2,193.4 L1246.7,182"/>
<path d="M1193,155.8 L1214.6,144.6 M1213,158.2 L1235,148 M1190.5,150.8 L1232,156.3 M1198,146.8 L1240.5,152.8"/>
</g>
<text x="1205.4" y="184.6" font-size="8.5" font-weight="bold" fill="#3cae3c" text-anchor="middle">-y</text>
<ellipse cx="1235.4" cy="178.3" rx="0.9" ry="1.6" fill="#d86060"/>
</svg>
<svg style="left:765px;top:795px;" width="110" height="80" viewBox="765 795 110 80" font-family="Liberation Sans, sans-serif">
<path d="M805.8,812.6 L790,820.8" stroke="#1ee61e" stroke-width="3.2"/><path d="M793.8,814.8 l-7.4,8 l10.4,-1.2 z" fill="#1ee61e"/>
<path d="M805.8,812.6 L832,816.7" stroke="#f00a0a" stroke-width="2.6"/><path d="M832.4,813.4 l8.4,4.7 l-9.6,2.4 z" fill="#f00a0a"/>
<path d="M805.9,812.6 V841" stroke="#0a0a8c" stroke-width="2.6"/><path d="M802.6,840.6 h6.6 l-3.3,10.4 z" fill="#06066e"/>
<circle cx="805.8" cy="812.4" r="3.5" fill="#f2dc14"/><circle cx="805.2" cy="811.6" r="1.6" fill="#fff46a"/>
<text x="850" y="823.6" font-size="10.5" fill="#f00a0a" text-anchor="middle">X</text>
<text x="779" y="829" font-size="11.2" fill="#10c010" textLength="5.2" lengthAdjust="spacingAndGlyphs">Y</text>
<text x="806" y="865.2" font-size="10.5" fill="#0a0a8c" text-anchor="middle">Z</text>
</svg>
<!-- BOTTOM BAR -->
<div class="a" style="left:0px;top:917px;width:1280px;height:43px;background:#fff;"></div>
<div class="a" style="left:10px;top:927px;width:25px;height:21px;background:#cfe4f7;"></div>
<div class="a" style="left:45px;top:927px;width:25px;height:21px;background:#cfe4f7;"></div>
<div class="a" style="left:104px;top:927px;width:25px;height:21px;background:#cfe4f7;"></div>
<div class="a" style="left:139px;top:927px;width:25px;height:21px;background:#cfe4f7;"></div>
<div class="a" style="left:174px;top:927px;width:25px;height:21px;background:#cfe4f7;"></div>
<div class="a" style="left:202px;top:927px;width:25px;height:21px;background:#e4e4e4;"></div>
<div class="a" style="left:237px;top:927px;width:25px;height:21px;background:#e4e4e4;"></div>
<div class="a" style="left:80px;top:927px;width:21px;height:21px;background:#ccffff;border:1px solid #000;"></div>
<div class="a" style="left:1006px;top:928px;width:81px;height:21px;background:#fdfdfd;border:1px solid #0f6cbd;border-radius:4px;"></div>
<div class="a" style="left:1097px;top:928px;width:81px;height:21px;background:#fdfdfd;border:1px solid #c8c8c8;border-bottom-color:#b0b0b0;border-radius:4px;"></div>
<div class="a" style="left:1188px;top:928px;width:81px;height:21px;background:#f9f9f9;border:1px solid #e6e6e6;border-radius:4px;"></div>
<span class="t" style="left:897.28px;width:300px;text-align:center;top:931px;letter-spacing:-1.058px;">OK</span>
<span class="t" style="left:987.31px;width:300px;text-align:center;top:931px;letter-spacing:-0.424px;">Cancel</span>
<span class="t" style="left:1078.90px;width:300px;text-align:center;top:931px;letter-spacing:-0.003px;color:#8f8f8f;">Apply</span>
<svg style="left:1266px;top:946px;" width="12" height="12" viewBox="1266 946 12 12"><g fill="#8c8c8c"><rect x="1274.6" y="949" width="1.7" height="1.7"/><rect x="1271.5" y="952.1" width="1.7" height="1.7"/><rect x="1274.6" y="952.1" width="1.7" height="1.7"/><rect x="1268.4" y="955.1" width="1.7" height="1.7"/><rect x="1271.5" y="955.1" width="1.7" height="1.7"/><rect x="1274.6" y="955.1" width="1.7" height="1.7"/></g></svg>
<!-- ICONS OVERLAY (page coordinates) -->
<svg style="left:0;top:0;pointer-events:none;" width="1280" height="960" viewBox="0 0 1280 960" font-family="Liberation Sans, sans-serif">
<defs>
 <linearGradient id="gwin" x1="0" y1="0" x2="1" y2="1"><stop offset="0" stop-color="#fff"/><stop offset="1" stop-color="#d4d4d4"/></linearGradient>
 <g id="iwin"><rect x="0.5" y="0.5" width="10.6" height="10.2" fill="url(#gwin)" stroke="#555" stroke-width="1"/><rect x="1" y="1" width="9.6" height="2.2" fill="#fff"/><rect x="4" y="1" width="6.4" height="1.7" fill="#2f55ee"/><path d="M1,3.3 H10.6" stroke="#555" stroke-width="0.6"/></g>
 <g id="ifloppy"><path d="M0.8,0 H10 L12,2 V12 H0 V0.8 Q0,0 0.8,0 Z"/><rect x="2.4" y="1.6" width="6.6" height="3.8" fill="#cfe4f7"/><path d="M3.4,2.9 H8 M3.4,4.2 H8" stroke-width="0.8" stroke="currentColor"/><rect x="3" y="8" width="6" height="4" fill="#cfe4f7"/><rect x="4.2" y="9" width="1.4" height="3"/></g>
</defs>
<!-- edit name button -->
<g stroke="#555" stroke-width="1.2" fill="none"><path d="M717.7,67.5 H713.6 Q712.6,67.5 712.6,68.5 V76.5 Q712.6,77.5 713.6,77.5 H715 M719.2,77.5 H727 M725.2,67.5 H727"/></g>
<path d="M721.2,64.8 L723.6,66 L718.2,75.6 L716,77.6 L716,74.6 Z" fill="#555"/><path d="M720.1,66.6 L722.7,67.9" stroke="#cfe4f7" stroke-width="0.7"/><path d="M716.7,73.6 L718.8,74.8" stroke="#cfe4f7" stroke-width="0.6"/>
<!-- pick nodes button -->
<path d="M1247.9,64.4 l4.6,4.6 M1252.5,64.4 l-4.6,4.6" stroke="#f01616" stroke-width="1.3"/>
<path d="M1251.4,67.4 V77.8 L1253.8,75.6 L1255.6,79.6 L1257.4,78.8 L1255.6,75 L1258.8,75 Z" fill="#f4f4f4" stroke="#8a8a8a" stroke-width="0.8"/>
<!-- list buttons -->
<use href="#iwin" x="24" y="891"/>
<path d="M23.5,885.2 l1.3,3.2 l3.6,-1.6 l-2.3,2.9 l3,2 l-3.5,0.1 l-0.5,3.9 l-1.6,-3.4 l-3.4,1.8 l2.1,-3.1 l-3,-1.9 l3.5,-0.2 z" fill="#ffff00" stroke="#b8b860" stroke-width="0.5"/>
<use href="#iwin" x="47" y="886"/><use href="#iwin" x="51" y="891"/>
<g fill="#f4f4f4" stroke="#c4c4c4" stroke-width="0.6"><rect x="82.3" y="887.6" width="5.2" height="5"/><rect x="82.3" y="895.4" width="5.2" height="5"/><rect x="110.3" y="887.6" width="5.2" height="5"/><rect x="110.5" y="895.6" width="5" height="5" fill="#ececec" stroke="#bcbcbc"/></g>
<g fill="none" stroke="#333" stroke-width="1.1"><path d="M82,889.6 l2.5,2.6 l3.4,-5.4 M82,897.4 l2.5,2.6 l3.4,-5.4 M110,889.6 l2.5,2.6 l3.4,-5.4"/></g>
<path d="M89.6,894 Q92,895.4 92.8,898.2 Q94.6,893.6 97.8,890 Q94.4,892.6 92.6,896 Q91.6,894.6 89.6,894 Z" fill="#9a9a9a" stroke="#9a9a9a" stroke-width="0.8"/>
<path d="M117.2,891.8 Q121,889 125.2,891.4 M117.4,896 Q121.6,897.8 125.6,894.4" fill="none" stroke="#9a9a9a" stroke-width="1.3"/><path d="M117,893.2 l0.3,-2.6 l2.2,1.5 z M126,893 l-2.6,0.2 l1.8,2.2 z" fill="#9a9a9a"/>
<path d="M203,889.2 L212.8,899 M212.8,889.2 L203,899" stroke="#ff0000" stroke-width="2.7" stroke-linecap="round"/>
<!-- components panel buttons -->
<g>
<rect x="254.5" y="397.5" width="7" height="9" fill="#fff" stroke="#9a9a9a"/><path d="M254.5,402 H261.5" stroke="#9a9a9a"/>
<path d="M254.4,394.5 L258.2,390.6 V393.3 H262 V395.8 H258.2 V398.4 Z" fill="#009a48"/><path d="M262,392.4 H269.4 M262,396.6 H269.4" stroke="#58bf8e" stroke-width="0.9"/>
<rect x="282.5" y="391.5" width="7" height="9" fill="#fff" stroke="#9a9a9a"/><path d="M282.5,396 H289.5" stroke="#9a9a9a"/>
<path d="M282.6,403.5 L286.4,399.6 V402.3 H290.4 V404.8 H286.4 V407.4 Z" fill="#009a48"/><path d="M290.4,401.4 H297.6 M290.4,405.6 H297.6" stroke="#58bf8e" stroke-width="0.9"/>
</g>
<g><path d="M484.2,397 l2.6,-1.4 l2.6,1.4 v2.2 l2,1 v3 l-2.6,1.2 l-2,-1 l-2,1 l-2.6,-1.2 v-3 l2,-1 z" fill="#14502c"/><rect x="483.6" y="401" width="1.8" height="2" fill="#8fe08f"/><rect x="487.8" y="401.4" width="1.8" height="2" fill="#8fe08f"/><rect x="486" y="396.8" width="1.6" height="1.6" fill="#5cc06c"/></g>
<g transform="translate(511,395)" fill="#555" color="#555"><use href="#ifloppy"/></g>
<path d="M519.4,393.6 l3.4,-2.4 l4,1.2 v4.4 l-3.2,2.6 l-4.2,-1.6 z" fill="#1f8a3a"/><path d="M519.4,393.6 l4.2,1.4 l3.2,-2.6 M523.6,395 v4.4" stroke="#0f5a24" stroke-width="0.6" fill="none"/><rect x="520.4" y="395.4" width="1.8" height="1.8" fill="#a4eaa4"/><rect x="524" y="392.6" width="1.6" height="1.6" fill="#7fd88a"/>
<path d="M714,394.2 L723.8,404 M723.8,394.2 L714,404" stroke="#ff0000" stroke-width="2.7" stroke-linecap="round"/>
<!-- bottom bar icons -->
<circle cx="22.8" cy="935.2" r="6.2" fill="#666"/><path d="M17.6,938.4 L14.8,944 L21.4,941.2 Z" fill="#666"/>
<text x="22.8" y="939.2" font-size="10.5" font-weight="bold" fill="#fff" text-anchor="middle">?</text>
<rect x="49.2" y="929.2" width="15.8" height="4.2" fill="#90d880" stroke="#6fbf68" stroke-width="0.5"/><path d="M51.8,929.4 v2 M54.4,929.4 v2 M57,929.4 v2 M59.6,929.4 v2 M62.2,929.4 v2" stroke="#5aa858" stroke-width="0.6"/>
<text x="48.4" y="942.2" font-size="10" fill="#111" textLength="7.6" lengthAdjust="spacingAndGlyphs">0,</text>
<text x="56" y="942.2" font-size="10" fill="#2a5cd8" textLength="9" lengthAdjust="spacingAndGlyphs">00</text><path d="M55.8,943.6 H65" stroke="#2a5cd8" stroke-width="0.8"/>
<g stroke="#888" stroke-width="0.4"><rect x="108" y="929.2" width="3.3" height="3.2" fill="#f01818"/><rect x="111.3" y="929.2" width="3.3" height="3.2" fill="#f4f018"/><rect x="108" y="932.4" width="3.3" height="3.2" fill="#18d818"/><rect x="111.3" y="932.4" width="3.3" height="3.2" fill="#3858f0"/></g>
<text x="111.4" y="943.6" font-size="10" font-weight="bold" fill="#111" text-anchor="middle">A</text><path d="M108,944.6 h1.6 M110.6,944.6 h1.6 M113.2,944.6 h1.6" stroke="#111" stroke-width="1"/>
<rect x="115.5" y="934.5" width="8.4" height="6" fill="#f4f4f4" stroke="#777"/><rect x="117.4" y="934.6" width="6.4" height="1.7" fill="#1f3fb0"/>
<rect x="143.5" y="930.5" width="15.4" height="10.4" fill="#d8e8f8" stroke="#808080" stroke-width="1"/><path d="M151,941 v2.6 M147.4,944 h7.4" stroke="#707070" stroke-width="1.2"/>
<path d="M145.6,937.6 Q148,931.6 153.4,931 L157.6,934 Q152.6,934.6 150.6,939.6 Z" fill="#2d62b8"/><path d="M147.4,936.6 Q150,933 154.6,932.2 M149,938 Q151.4,934.6 156,933.4" stroke="#8fb4ec" stroke-width="0.6" fill="none"/>
<g transform="translate(178,933)" fill="#4a4a4a" color="#4a4a4a"><use href="#ifloppy"/></g>
<path d="M183.2,930.2 H190.4 M186.8,930.2 V937.8 M183.2,937.8 H190.4" stroke="#10109a" stroke-width="1.6" fill="none"/><rect x="188.6" y="929" width="5.6" height="7.6" fill="#6a6af0" fill-opacity="0.85"/><rect x="189.8" y="932.6" width="3.4" height="1.4" fill="#2a2ab0"/>
<g transform="translate(206,933)" fill="#8c8c8c" color="#8c8c8c" opacity="0.95"><use href="#ifloppy"/></g>
<rect x="206" y="933" width="12" height="12" fill="none"/>
<path d="M211.2,930.2 H218.4 M214.8,930.2 V937.8 M211.2,937.8 H218.4" stroke="#7a7a7a" stroke-width="1.4" fill="none"/><rect x="216.6" y="929" width="5.6" height="7.6" fill="#c4c4c4" fill-opacity="0.9"/><rect x="217.8" y="932.6" width="3.4" height="1.4" fill="#8a8a8a"/>
<text x="241.6" y="943.4" font-size="14" font-style="italic" font-family="Liberation Serif, serif" fill="#666">f</text><text x="247.4" y="943" font-size="11.5" font-style="italic" font-family="Liberation Serif, serif" fill="#666">x</text>
<path d="M247.4,931.6 q3.6,-3.6 7.4,0 q-3.8,3.4 -7.4,0 z" fill="#f2f2f2" stroke="#777" stroke-width="0.8"/><circle cx="251.1" cy="931.6" r="1.3" fill="#777"/>
</svg>
<!-- TEAL ARROWS OVERLAY -->
<svg style="left:0;top:0;pointer-events:none;" width="1280" height="960" viewBox="0 0 1280 960">
<defs><filter id="ash" x="-5%" y="-5%" width="115%" height="115%"><feGaussianBlur in="SourceAlpha" stdDeviation="2"/><feOffset dx="-0.5" dy="2.5"/><feComponentTransfer><feFuncA type="linear" slope="0.4"/></feComponentTransfer><feMerge><feMergeNode/><feMergeNode in="SourceGraphic"/></feMerge></filter></defs>
<g filter="url(#ash)" fill="#05ab8c" stroke="none">
<g transform="translate(357,202.5) rotate(54.97)">
 <path d="M0,-5.75 A5.75,5.75 0 0 0 0,5.75 L306,5.75 L306,15 L334,0 L306,-15 L306,-5.75 Z"/>
</g>
<g transform="translate(636.75,482.4) rotate(0.5)">
 <path d="M0,-5.75 A5.75,5.75 0 0 0 0,5.75 L225,5.75 L225,15 L255,0.5 L225,-15 L225,-5.75 Z"/>
</g>
</g>
</svg>
<!-- mouse cursor -->
<svg style="left:700px;top:12px;" width="30" height="30" viewBox="700 12 30 30"><path d="M708.6 20.4 L708.6 34.2 L711.6 31.2 L714.2 36.8 L716.4 35.8 L713.9 30.6 L718.8 30.6 Z" fill="#000" stroke="#fff" stroke-width="0.6"/></svg>
</div></div>
</body></html>
